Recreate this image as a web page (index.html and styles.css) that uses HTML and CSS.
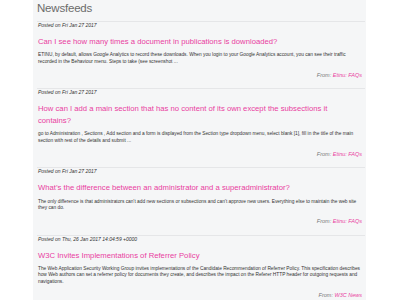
FILE: index.html
```html
<!DOCTYPE html>
<html lang="en">
<head>
    <meta charset="UTF-8">
    <title>Newsfeeds</title>
    <link rel="stylesheet" href="styles.css">
</head>
<body>
<div class="panel">
    <h2 class="title">Newsfeeds</h2>

    <div class="feed">
        <p class="posted">Posted on Fri Jan 27 2017</p>
        <h3><a href="#">Can I see how many times a document in publications is downloaded?</a></h3>
        <p class="summary">ETINU, by default, allows Google Analytics to record these downloads. When you login to your Google Analytics account, you can see their traffic recorded in the Behaviour menu. Steps to take (see screenshot ...</p>
        <p class="source">From: <a href="#">Etinu: FAQs</a></p>
    </div>

    <div class="feed">
        <p class="posted">Posted on Fri Jan 27 2017</p>
        <h3><a href="#">How can I add a main section that has no content of its own except the subsections it contains?</a></h3>
        <p class="summary">go to Administration , Sections , Add section and a form is displayed from the Section type dropdown menu, select blank [1], fill in the title of the main section with rest of the details and submit ...</p>
        <p class="source">From: <a href="#">Etinu: FAQs</a></p>
    </div>

    <div class="feed">
        <p class="posted">Posted on Fri Jan 27 2017</p>
        <h3><a href="#">What’s the difference between an administrator and a superadministrator?</a></h3>
        <p class="summary">The only difference is that administrators can’t add new sections or subsections and can’t approve new users. Everything else to maintain the web site they can do.</p>
        <p class="source">From: <a href="#">Etinu: FAQs</a></p>
    </div>

    <div class="feed">
        <p class="posted">Posted on Thu, 26 Jan 2017 14:04:59 +0000</p>
        <h3><a href="#">W3C Invites Implementations of Referrer Policy</a></h3>
        <p class="summary">The Web Application Security Working Group invites implementations of the Candidate Recommendation of Referrer Policy. This specification describes how Web authors can set a referrer policy for documents they create, and describes the impact on the Referer HTTP header for outgoing requests and navigations.</p>
        <p class="source">From: <a href="#">W3C News</a></p>
    </div>
</div>
</body>
</html>
```

FILE: styles.css
```css
body {
    margin: 0;
    font-family: "Liberation Sans", Arial, sans-serif;
    background: #fff;
    color: #333;
}

.panel {
    width: 333px;
    margin-left: 33px;
    padding: 0 1px 0 4px;
    box-sizing: border-box;
    background: #f5f6f7;
    min-height: 300px;
}

.title {
    margin: 0;
    padding-top: 1px;
    padding-bottom: 6px;
    font-size: 11.5px;
    line-height: 14px;
    font-weight: normal;
    letter-spacing: -0.2px;
    color: #6b6b6b;
}

.feed {
    border-top: 1px solid #e5e6e8;
    padding-bottom: 9.6px;
}

.posted {
    margin: 0 0 0 1px;
    font-size: 5px;
    line-height: 6px;
    font-style: italic;
    color: #333;
}

.feed h3 {
    margin: 8px 6px 0 1px;
    font-size: 7.7px;
    line-height: 11.7px;
    font-weight: normal;
}

.feed a {
    color: #e9409f;
    text-decoration: none;
}

.summary {
    margin: 4.5px 3px 0 1px;
    font-size: 4.8px;
    line-height: 6.5px;
}

.source {
    margin: 6.5px 3px 0 0;
    text-align: right;
    font-size: 5.5px;
    line-height: 7px;
    font-style: italic;
    color: #777;
}
```
